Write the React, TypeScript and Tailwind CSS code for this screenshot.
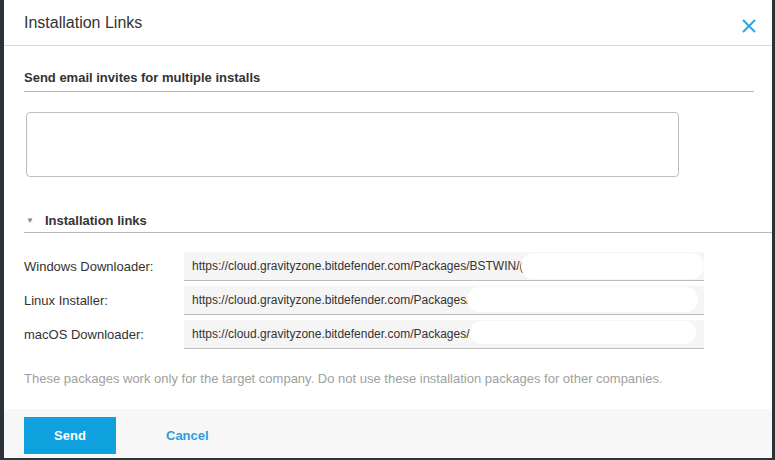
import React from "react";

const rows = [
  { label: "Windows Downloader:", text: "https://cloud.gravityzone.bitdefender.com/Packages/BSTWIN/(", blob: "left-[337px] right-[0px] top-[1px] bottom-[1px] rounded-[14px]" },
  { label: "Linux Installer:", text: "https://cloud.gravityzone.bitdefender.com/Packages/\u2019\u2019", blob: "left-[283px] right-[6px] top-[1px] bottom-[2px] rounded-[14px]" },
  { label: "macOS Downloader:", text: "https://cloud.gravityzone.bitdefender.com/Packages/", blob: "left-[286px] right-[8px] top-[1px] bottom-[4px] rounded-[14px]" },
];

export default function App() {
  return (
    <div className="w-[775px] h-[460px] bg-[#2b323a] pl-[4px] pr-[3px] pb-[2px] overflow-hidden" style={{ fontFamily: '"Liberation Sans", Arial, sans-serif' }}>
      <div className="bg-white h-full flex flex-col">
        <div className="h-[46px] flex items-start justify-between border-b border-[#d9d9d9] pl-[20px] pr-[16px]">
          <div className="text-[16px] text-[#333] mt-[13px] leading-[20px]">Installation Links</div>
          <svg width="14" height="14" viewBox="0 0 14 14" className="mt-[19px]">
            <path d="M1 1 L13 13 M13 1 L1 13" stroke="#29a8e0" strokeWidth="2" />
          </svg>
        </div>
        <div className="flex-1 flex flex-col">
          <div className="ml-[20px] mr-[18px] mt-[25px] pb-[6px] border-b border-[#b9b9b9] text-[13px] font-bold text-[#333] leading-[14px]">
            Send email invites for multiple installs
          </div>
          <div className="ml-[22px] mt-[20px] w-[653px] h-[65px] border border-[#bdbdbd] rounded-[4px]"></div>
          <div className="ml-[20px] mt-[37px] pb-[4px] border-b border-[#b9b9b9] flex items-center text-[13px] font-bold text-[#333] leading-[14px]">
            <span className="text-[8px] text-[#888] ml-[2px] mr-[11px] font-normal">▼</span>
            Installation links
          </div>
          <div className="mt-[19px] flex flex-col gap-[5px] ml-[20px]">
            {rows.map((r) => (
              <div key={r.label} className="flex items-center h-[29px]">
                <div className="w-[160px] text-[13px] text-[#333]">{r.label}</div>
                <div className="relative w-[520px] h-[29px] bg-[#f5f5f5] border-b border-[#bbb] flex items-center pl-[8px] text-[12px] text-[#333] overflow-hidden whitespace-nowrap">
                  {r.text}
                  <div className={"absolute bg-white " + r.blob}></div>
                </div>
              </div>
            ))}
          </div>
          <div className="ml-[20px] mt-[20px] text-[13px] text-[#a0a0a0]">
            These packages work only for the target company. Do not use these installation packages for other companies.
          </div>
        </div>
        <div className="h-[49px] bg-[#f7f7f7] flex items-start pl-[20px] pt-[8px]">
          <div className="w-[92px] h-[37px] bg-[#0ea1dd] text-white font-bold text-[13px] flex items-center justify-center">Send</div>
          <div className="ml-[50px] h-[37px] flex items-center text-[#2c9fdc] font-bold text-[13px]">Cancel</div>
        </div>
      </div>
    </div>
  );
}
